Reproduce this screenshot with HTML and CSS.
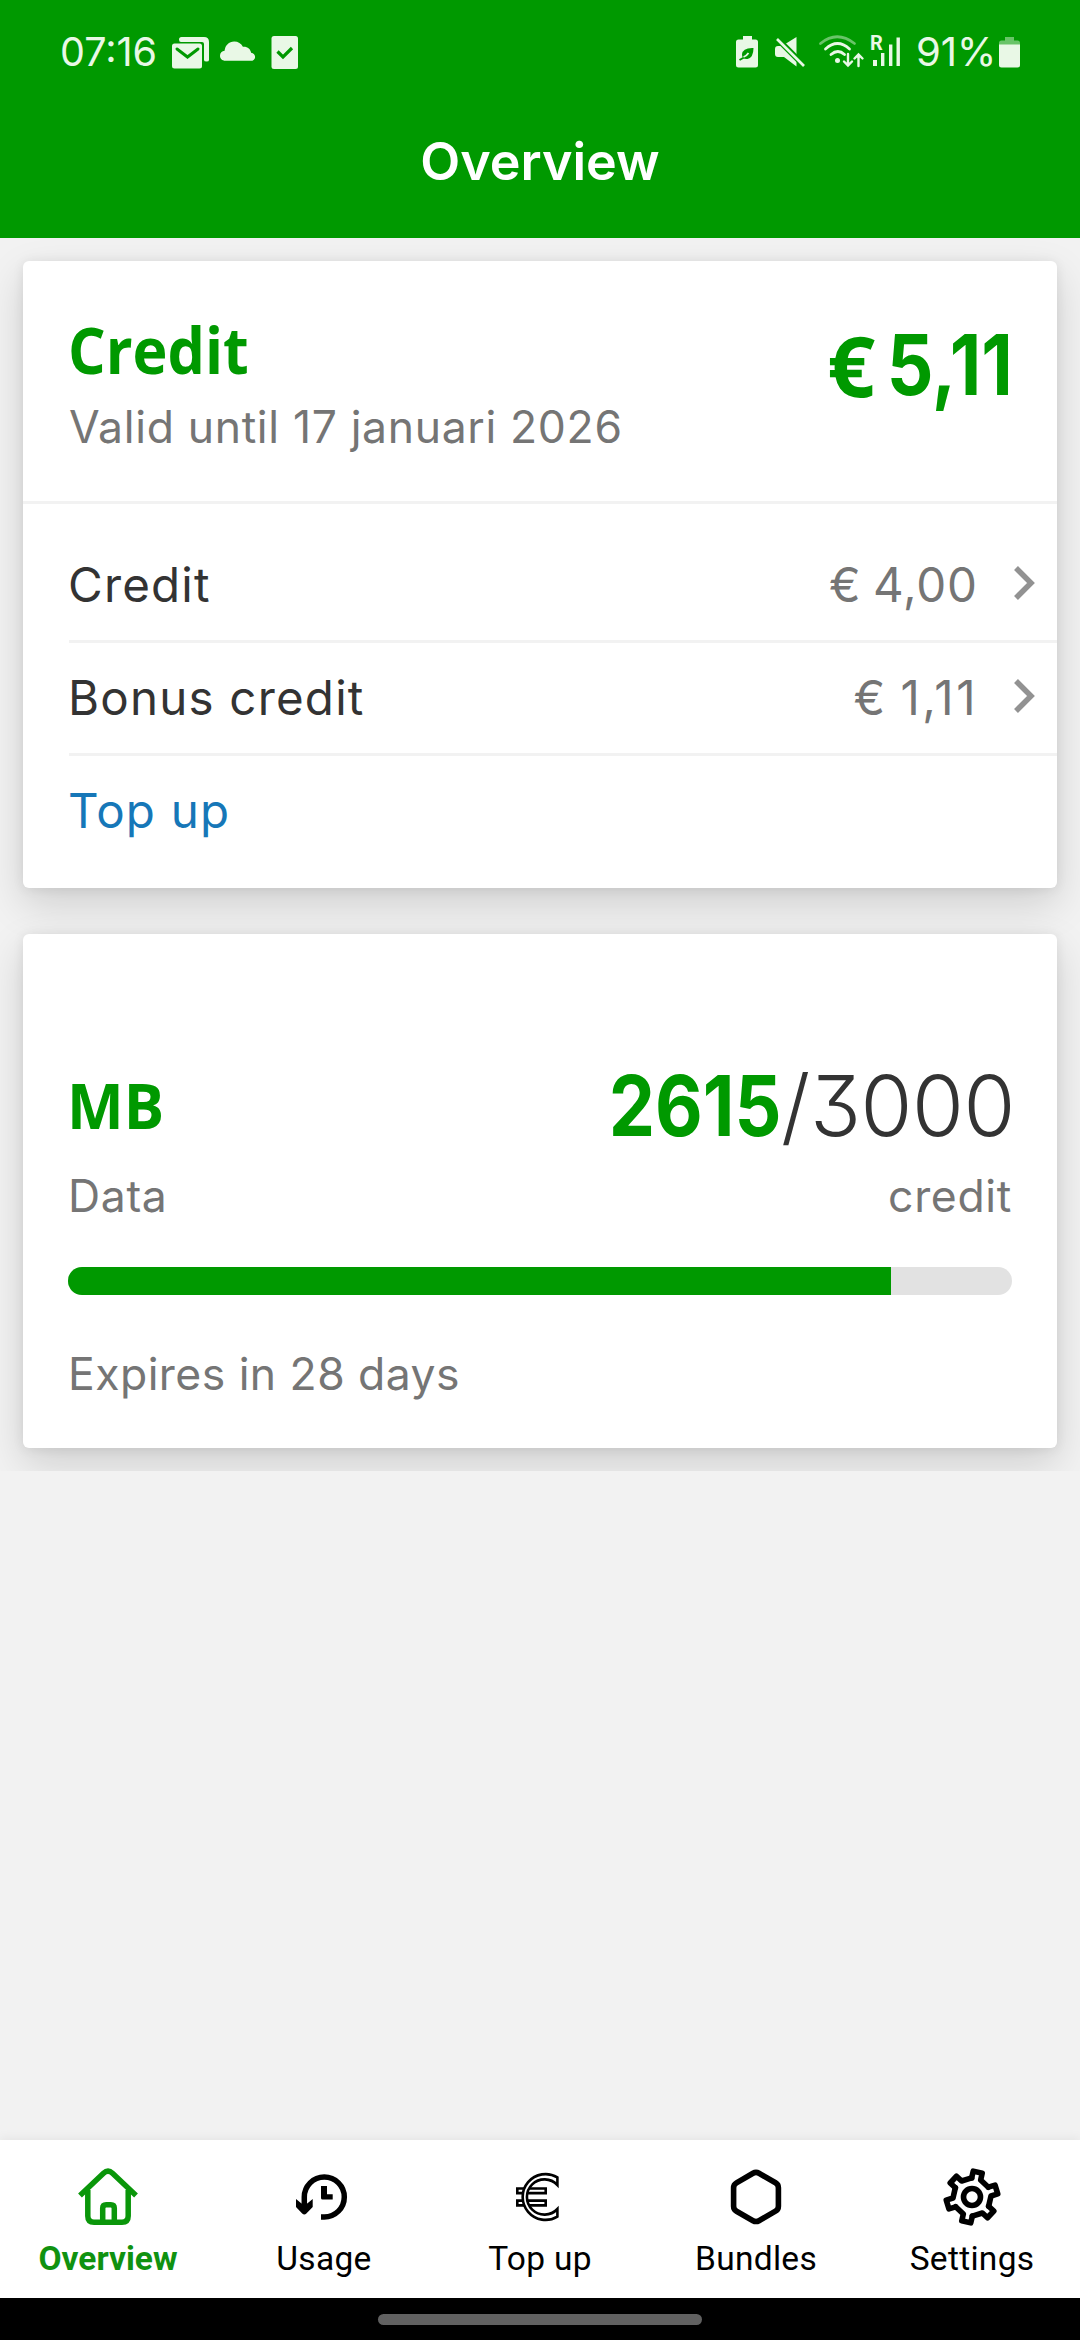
FILE: index.html
```html
<!DOCTYPE html>
<html lang="en">
<head>
<meta charset="utf-8">
<title>Overview</title>
<link rel="stylesheet" href="styles.css">
</head>
<body>
<div class="screen">
  <header class="header">
    <div class="status">
      <span class="clock">07:16</span>
      <svg class="status-left" width="130" height="70" viewBox="170 17 130 70" fill="#e9f8e6">
        <path d="M179 39.500q0-2.500 2.500-2.500H204q5 0 5 5v18q0 1.600-2.500 1.600T204 60V44q0-2-2-2H181q-2 0-2-2.500z"/>
        <rect x="172" y="43.500" width="30" height="25" rx="2.500"/>
        <path d="M177 49l10.500 8 10.500-8" fill="none" stroke="#009900" stroke-width="3" stroke-linecap="round"/>
        <path d="M225.500 60.800c-3.500 0-5.500-2.200-5.500-5s2-4.600 4.600-5c.4-5.300 4.400-9.300 9.600-9.300 4 0 7 2 8.700 5.200 4.600-.4 7.600 2.300 8.200 6 2.500.5 4 2 4 4.200 0 2.400-1.700 3.900-4.600 3.900z"/>
        <rect x="271.500" y="36" width="26.500" height="33" rx="2.500"/>
        <path d="M277.500 51.500l5.500 5.500 9-9" fill="none" stroke="#009900" stroke-width="3.200"/>
      </svg>
      <span class="grow"></span>
      <svg class="status-right" width="174" height="70" viewBox="733 17 174 70" fill="#e9f8e6">
        <path d="M743 36h9v3.500h3.500q2.500 0 2.500 2.500v23q0 2.500-2.500 2.500h-17q-2.500 0-2.500-2.500V42q0-2.500 2.500-2.500h4.500z"/>
        <path d="M753.500 48q-11-.5-11.500 6.500 0 5 5.500 4.500 6-1.500 6-11z" fill="#009900"/>
        <path d="M739.500 60l4.500-2.500" stroke="#009900" stroke-width="2"/>
        <path d="M743.500 57q3-1 5-4" fill="none" stroke="#e9f8e6" stroke-width="1.800"/>
        <path d="M775 49q0-3 3-3h4l14.500-9v29.500L784 57h-6q-3 0-3-3z"/>
        <path d="M775.500 37L805 66.500" stroke="#009900" stroke-width="6"/>
        <path d="M777 39l27 27" stroke="#e9f8e6" stroke-width="2.600"/>
        <g fill="none" stroke="#e9f8e6" stroke-width="2.800" stroke-linecap="round">
          <path d="M820.500 43.500Q837 30 854.500 43.500" opacity=".45"/>
          <path d="M825.500 49q12-11 24 0M831 54.500q7-6 13.500 0"/>
          <path d="M848 54v11M844 61.500l4 4 4-4M858.500 66V54.500M854.500 58.500l4-4 4 4" stroke-width="2.400"/>
        </g>
        <circle cx="837.500" cy="60.500" r="2.500"/>
        <text x="870" y="50" class="roaming">R</text>
        <path d="M873 60h4v6h-4zM881 53h3.400v13H881zM889 44.500h3.400V66H889zM896.500 37.500h3.400V66h-3.400z"/>
      </svg>
      <span class="percent">91%</span>
      <svg class="battery" width="24" height="70" viewBox="998 17 24 70" fill="#e9f8e6">
        <path d="M1005 37h9v3.500h3.500q2.500 0 2.500 2.500v2.500h-21V43q0-2.500 2.500-2.500h3.500z" opacity=".45"/>
        <path d="M999 44.500h21V65q0 2.500-2.500 2.500h-16q-2.500 0-2.500-2.500z"/>
      </svg>
    </div>
    <h1 class="title">Overview</h1>
  </header>

  <main class="cards">
    <section class="card credit">
      <div class="credit-head">
        <div>
          <h2 class="name">Credit</h2>
          <p class="note valid">Valid until 17 januari 2026</p>
        </div>
        <div class="big total"><span class="euro">€</span><span class="sum">5,11</span></div>
      </div>
      <div class="list">
        <div class="row">
          <span class="label">Credit</span><span class="price">€ 4,00</span>
          <svg class="chevron" width="24" height="40" viewBox="0 0 24 40"><path d="M3 5l15 15L3 35" fill="none" stroke="#929292" stroke-width="5.500"/></svg>
        </div>
        <div class="row">
          <span class="label">Bonus credit</span><span class="price wide">€ 1,11</span>
          <svg class="chevron" width="24" height="40" viewBox="0 0 24 40"><path d="M3 5l15 15L3 35" fill="none" stroke="#929292" stroke-width="5.500"/></svg>
        </div>
        <div class="row last"><span class="label link">Top up</span></div>
      </div>
    </section>

    <section class="card data">
      <div class="data-head">
        <h2 class="name unit">MB</h2>
        <div class="big figures"><span class="used">2615</span><span class="limit">/3000</span></div>
      </div>
      <div class="data-sub"><span class="note">Data</span><span class="note">credit</span></div>
      <div class="bar"><div class="fill" style="width:87.170%"></div></div>
      <p class="note expiry">Expires in 28 days</p>
    </section>
  </main>

  <nav class="nav">
    <a class="tab active">
      <svg width="60" height="60" viewBox="0 0 60 60" fill="none" stroke="#0a960a" stroke-width="5.500">
        <path d="M2 29.500L25.500 7.200q4.500-4.200 9 0L58 29.500"/>
        <path d="M9.800 24v26q0 6.200 6.200 6.200h28q6.200 0 6.200-6.200V24"/>
        <path d="M24.700 56V42.300q0-3.500 3.500-3.500h4.600q3.500 0 3.500 3.500V56"/>
      </svg>
      <span>Overview</span>
    </a>
    <a class="tab">
      <svg width="60" height="60" viewBox="0 0 60 60">
        <path d="M27 51h3.300a20 20 0 1 0-20-20v8" fill="none" stroke="#000" stroke-width="5.500"/>
        <path d="M2 33l5.500 4.500h5.700l5.500-4.500v8l-6.300 6.500q-2.100 1.800-4.200 0L2 41z"/>
        <path d="M27 20h6v8.200h5.700v5.400H28.500q-1.500 0-1.500-1.500z"/>
      </svg>
      <span>Usage</span>
    </a>
    <a class="tab">
      <svg width="60" height="60" viewBox="0 0 60 60" fill="#fff" stroke="#000" stroke-width="2.600">
        <path d="M7.300 22.500h28.400v4.600H7.300zM7.300 34.600h28.400v4.800H7.300z"/>
        <path d="M47.400 11.400a22.900 22.900 0 1 0 0 39.200V43a17.600 17.600 0 1 1 0-24z"/>
      </svg>
      <span>Top up</span>
    </a>
    <a class="tab">
      <svg width="60" height="60" viewBox="0 0 60 60" fill="none" stroke="#000" stroke-width="5.600">
        <path d="M27 7.300q3-1.700 6 0L49.500 16.800q2.900 1.700 2.900 5v18.400q0 3.300-2.900 5L33 54.700q-3 1.700-6 0L10.500 45.200q-2.900-1.700-2.900-5V21.800q0-3.300 2.900-5z"/>
      </svg>
      <span>Bundles</span>
    </a>
    <a class="tab">
      <svg width="60" height="60" viewBox="-30 -31 60 60" fill="none" stroke="#000" stroke-width="5.600" stroke-linejoin="round" stroke-linecap="round">
        <circle r="8.500"/>
        <path transform="rotate(13)" d="M-4.600-18.500V-25.500H4.600V-18.500L13.720-13.230"/>
        <path transform="rotate(73)" d="M-4.600-18.500V-25.500H4.600V-18.500L13.720-13.230"/>
        <path transform="rotate(133)" d="M-4.600-18.500V-25.500H4.600V-18.500L13.720-13.230"/>
        <path transform="rotate(193)" d="M-4.600-18.500V-25.500H4.600V-18.500L13.720-13.230"/>
        <path transform="rotate(253)" d="M-4.600-18.500V-25.500H4.600V-18.500L13.720-13.230"/>
        <path transform="rotate(313)" d="M-4.600-18.500V-25.500H4.600V-18.500L13.720-13.230"/>
      </svg>
      <span>Settings</span>
    </a>
  </nav>
  <div class="gesture"><div class="handle"></div></div>
</div>
</body>
</html>
```
FILE: styles.css
```css
* { box-sizing: border-box; }
body, h1, h2, p { margin: 0; }
body { background: #f2f2f2; font-family: Inter, "Liberation Sans", sans-serif; }
svg { display: block; flex: none; }
.screen { width: 1080px; height: 2340px; display: flex; flex-direction: column; overflow: hidden; }

.header { height: 238px; background: #009900; color: #fff; padding-top: 17px; flex: none; }
.status { display: flex; height: 70px; line-height: 70px; padding: 0 58px 0 60px; color: #e9f8e6; }
.clock { font-size: 39.500px; width: 96px; }
.status-left { margin-left: 14px; }
.grow { flex: 1; }
.roaming { font: 700 20px Roboto, sans-serif; }
.percent { font-size: 40px; width: 80px; margin-left: 9px; }
.battery { margin-left: 2px; }
.title { margin-top: 45px; text-align: center; font-size: 52px; font-weight: 600; line-height: 60px; }

.cards { flex: none; height: 1233px; padding: 23px; overflow: hidden; display: flex; flex-direction: column; gap: 46px; }
.card { background: #fff; border-radius: 6px; box-shadow: 0 16px 40px rgba(0,0,0,.15), 0 1px 12px rgba(0,0,0,.08); }
.credit { height: 627px; }
.data { height: 514px; padding: 127px 45px 0; clip-path: inset(-40px -23px -23px); }

.name { font: 700 64px/70px "Open Sans", sans-serif; color: #009900; transform: scaleX(.925); transform-origin: left; margin-left: -1px; }
.note { font-size: 44.500px; line-height: 60px; color: #757575; letter-spacing: .66px; }
.big { font-size: 84px; line-height: 90px; white-space: nowrap; display: flex; }
.credit-head { height: 243px; border-bottom: 3px solid #f2f2f2; padding: 54px 46px 0; display: flex; justify-content: space-between; }
.valid { margin-top: 12px; }
.total { margin: 5px -2px 0 0; color: #009900; font-weight: 700; }
.euro { font-family: "Open Sans", sans-serif; margin-right: -7px; }
.sum { transform: scaleX(.87); transform-origin: right; }

.list { padding: 26px 0 0 46px; }
.row { height: 113px; line-height: 110px; border-bottom: 3px solid #f2f2f2; display: flex; align-items: center; font-size: 47.500px; }
.row.last { border: 0; padding-bottom: 3px; }
.label { flex: 1; color: #333; letter-spacing: 1.200px; margin-left: -1px; }
.link { color: #1677b8; }
.price { color: #757575; letter-spacing: .9px; word-spacing: -3px; }
.price.wide { letter-spacing: 2.500px; }
.chevron { margin: 0 20px 4px 35px; }

.data-head { display: flex; justify-content: space-between; }
.unit { font-size: 63px; margin-top: 9px; transform: scaleX(.955); margin-left: -1px; }
.figures { margin-right: -3px; }
.used { color: #009900; font-weight: 700; transform: scaleX(.875); transform-origin: right; }
.limit { color: #333; font-weight: 300; letter-spacing: -.4px; font-feature-settings: "cv09"; }
.data-sub { display: flex; justify-content: space-between; margin-top: 15px; }
.bar { height: 28px; margin: 41px 0 49px; border-radius: 14px; background: #e2e2e2; overflow: hidden; }
.fill { height: 100%; background: #009900; }
.expiry { letter-spacing: .45px; }

.nav { margin-top: auto; flex: none; height: 158px; padding-top: 26px; background: #fff; display: grid; grid-template-columns: repeat(5, 1fr); box-shadow: 0 -2px 10px rgba(0,0,0,.06); }
.tab { display: flex; flex-direction: column; align-items: center; gap: 13px; font: 400 33.500px/40px Roboto, sans-serif; letter-spacing: .3px; color: #000; }
.active { color: #109210; font-weight: 700; letter-spacing: 0; }
.gesture { flex: none; height: 42px; background: #000; padding-top: 16px; }
.handle { width: 324px; height: 11px; margin: 0 auto; border-radius: 6px; background: #616161; }
```
